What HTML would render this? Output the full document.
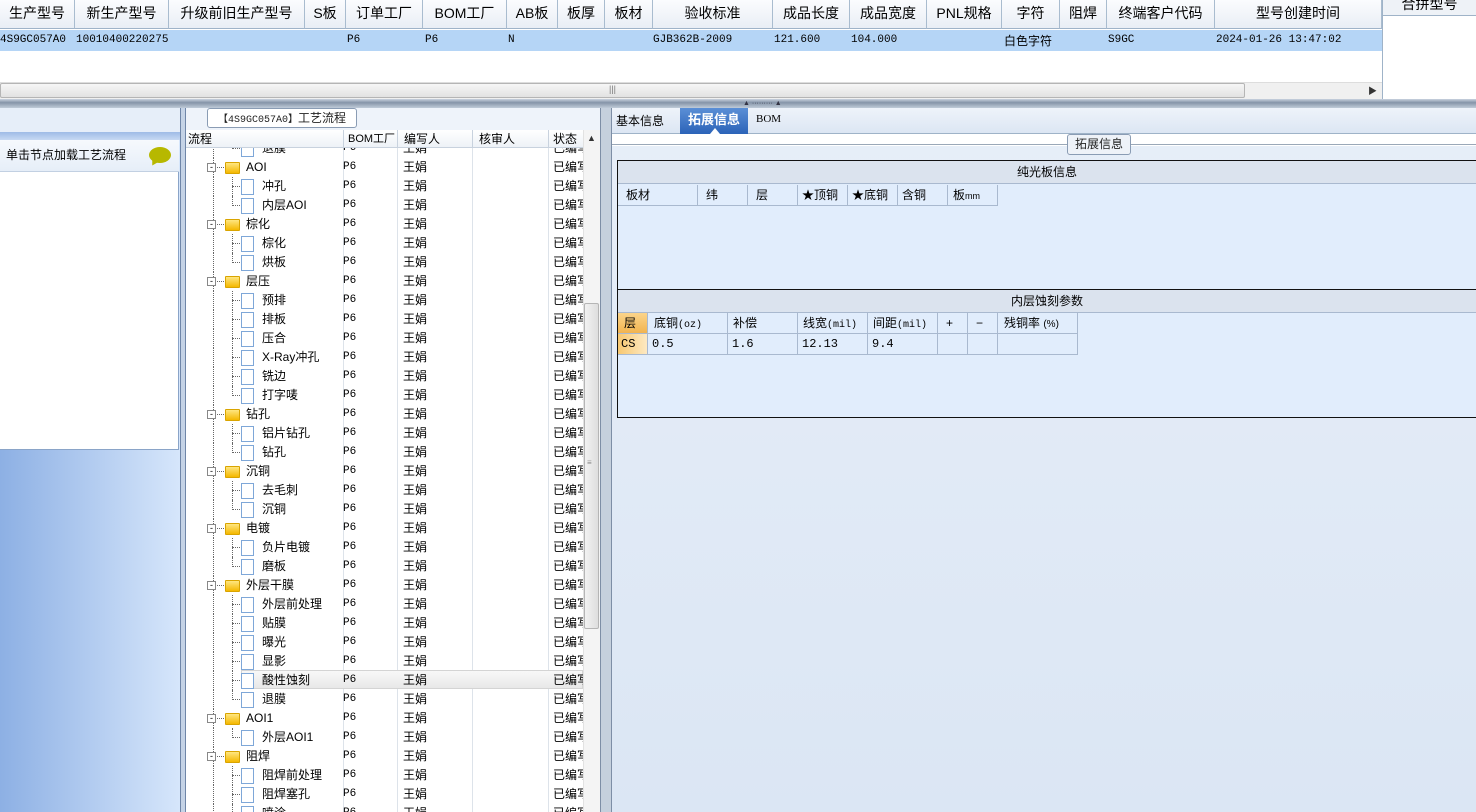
<!DOCTYPE html>
<html><head><meta charset="utf-8"><style>
*{margin:0;padding:0;box-sizing:border-box}
html,body{width:1476px;height:812px;overflow:hidden}
body{position:relative;background:#fff;font-family:"Liberation Sans","Noto Sans CJK SC",sans-serif;font-size:12px;color:#000}
.a{position:absolute}
.hd{position:absolute;top:0;height:29px;line-height:27px;font-size:14px;text-align:center;border-right:1px solid #a9bccf;background:linear-gradient(#fbfcfe,#e9eef5);border-bottom:1px solid #9fb3c8;white-space:nowrap;overflow:hidden}
.cell{position:absolute;top:30px;height:21px;line-height:21px;font-family:"Liberation Mono","Noto Sans CJK SC",monospace;font-size:11px;white-space:nowrap}
.tr{position:absolute;left:186px;width:397px;height:19px;line-height:19px;font-size:12px;white-space:nowrap}
.tr span{position:absolute}
.c1{left:157px;font-family:"Liberation Mono",monospace;font-size:11px}
.c2{left:217px}
.c3{left:367px}
.fold{position:absolute;width:15px;height:12px;top:4px;background:linear-gradient(#ffe680,#f5b800);border:1px solid #d9a400;border-radius:1px}
.doc{position:absolute;width:13px;height:16px;top:2px;background:#fff;border:1px solid #7ea7d8}
.exp{position:absolute;width:9px;height:9px;top:5px;border:1px solid #888;background:#fff;font-size:9px;line-height:6px;text-align:center}
.g{position:absolute;height:21px;line-height:20px;border-right:1px solid #a9b9cf;border-bottom:1px solid #a9b9cf;padding-left:8px;font-size:12px;white-space:nowrap}
</style></head><body>
<div class="hd" style="left:0;width:75px">生产型号</div>
<div class="hd" style="left:75px;width:94px">新生产型号</div>
<div class="hd" style="left:169px;width:136px">升级前旧生产型号</div>
<div class="hd" style="left:305px;width:41px">S板</div>
<div class="hd" style="left:346px;width:77px">订单工厂</div>
<div class="hd" style="left:423px;width:84px">BOM工厂</div>
<div class="hd" style="left:507px;width:51px">AB板</div>
<div class="hd" style="left:558px;width:47px">板厚</div>
<div class="hd" style="left:605px;width:48px">板材</div>
<div class="hd" style="left:653px;width:120px">验收标准</div>
<div class="hd" style="left:773px;width:77px">成品长度</div>
<div class="hd" style="left:850px;width:77px">成品宽度</div>
<div class="hd" style="left:927px;width:75px">PNL规格</div>
<div class="hd" style="left:1002px;width:58px">字符</div>
<div class="hd" style="left:1060px;width:47px">阻焊</div>
<div class="hd" style="left:1107px;width:108px">终端客户代码</div>
<div class="hd" style="left:1215px;width:167px">型号创建时间</div>
<div class="a" style="left:1382px;top:0;width:94px;height:16px;border-left:1px solid #9fb3c8;border-bottom:1px solid #9fb3c8;background:#eef2f7;font-size:14px;text-align:center;line-height:8px;overflow:hidden">合拼型号</div>
<div class="a" style="left:1382px;top:16px;width:1px;height:84px;background:#9fb3c8"></div>
<div class="a" style="left:0;top:30px;width:1382px;height:21px;background:#b5d5f6"></div>
<div class="cell" style="left:0">4S9GC057A0</div>
<div class="cell" style="left:76px">10010400220275</div>
<div class="cell" style="left:347px">P6</div>
<div class="cell" style="left:425px">P6</div>
<div class="cell" style="left:508px">N</div>
<div class="cell" style="left:653px">GJB362B-2009</div>
<div class="cell" style="left:774px">121.600</div>
<div class="cell" style="left:851px">104.000</div>
<div class="cell" style="left:1004px;font-family:'Noto Sans CJK SC',sans-serif;font-size:12px">白色字符</div>
<div class="cell" style="left:1108px">S9GC</div>
<div class="cell" style="left:1216px">2024-01-26 13:47:02</div>
<div class="a" style="left:0;top:82px;width:1382px;height:17px;background:#f0f0f0;border-top:1px solid #ddd"></div>
<div class="a" style="left:0;top:83px;width:1245px;height:15px;background:linear-gradient(#f6f6f6,#e2e2e2);border:1px solid #b5b5b5;border-radius:2px"></div>
<div class="a" style="left:609px;top:84px;font-size:9px;color:#777">|||</div>
<div class="a" style="left:1368px;top:84px;font-size:9px;color:#333">▶</div>
<div class="a" style="left:0;top:99px;width:1476px;height:9px;background:linear-gradient(#c9d3df,#8594a8 40%,#c0cbd8)"></div>
<div class="a" style="left:743px;top:100px;font-size:7px;color:#334">▲ ········· ▲</div>
<div class="a" style="left:0;top:108px;width:180px;height:704px;background:linear-gradient(90deg,#8db0e4,#d6e6fb)"></div>
<div class="a" style="left:0;top:108px;width:180px;height:24px;background:#e6eef9"></div>
<div class="a" style="left:0;top:132px;width:180px;height:8px;background:linear-gradient(#9ebbe6,#c7d9f3)"></div>
<div class="a" style="left:0;top:140px;width:179px;height:310px;background:#fff;border-right:1px solid #8aa4c8;border-bottom:1px solid #8aa4c8"></div>
<div class="a" style="left:0;top:140px;width:179px;height:32px;background:linear-gradient(#f6f9fd,#e6eef8);border-bottom:1px solid #c2d0e2"></div>
<div class="a" style="left:6px;top:146px;font-size:12px">单击节点加载工艺流程</div>
<div class="a" style="left:149px;top:147px;width:22px;height:16px;border-radius:50%;background:#b7b800"></div>
<div class="a" style="left:150px;top:159px;width:0;height:0;border-left:4px solid transparent;border-right:4px solid transparent;border-top:7px solid #b7b800;transform:rotate(30deg)"></div>
<div class="a" style="left:180px;top:108px;width:6px;height:704px;background:#c5d3e6;border-left:1px solid #6f86a8;border-right:1px solid #6f86a8"></div>
<div class="a" style="left:186px;top:108px;width:414px;height:704px;background:#eef3fa"></div>
<div class="a" style="left:186px;top:130px;width:414px;height:682px;background:#fff;border-top:1px solid #9fb3c8"></div>
<div class="a" style="left:207px;top:108px;width:150px;height:20px;background:#fff;border:1px solid #8a9cb4;border-radius:3px;font-size:12px;line-height:18px;text-align:center;color:#222"><span style="font-family:'Liberation Mono',monospace;font-size:10px">【4S9GC057A0】</span>工艺流程</div>
<div class="a" style="left:343px;top:130px;width:1px;height:682px;background:#dde3ea"></div>
<div class="a" style="left:397px;top:130px;width:1px;height:682px;background:#dde3ea"></div>
<div class="a" style="left:472px;top:130px;width:1px;height:682px;background:#dde3ea"></div>
<div class="a" style="left:548px;top:130px;width:1px;height:682px;background:#dde3ea"></div>
<div class="a" style="left:583px;top:130px;width:17px;height:682px;background:#f4f4f4;border-left:1px solid #e2e2e2"></div>
<div class="a" style="left:587px;top:133px;font-size:9px;color:#333">▲</div>
<div class="a" style="left:584px;top:303px;width:15px;height:326px;background:linear-gradient(90deg,#f2f2f2,#dedede);border:1px solid #b5b5b5;border-radius:2px"></div>
<div class="a" style="left:587px;top:461px;font-size:8px;color:#888;line-height:3px">≡</div>
<div class="a" style="left:241px;top:670px;width:342px;height:19px;background:linear-gradient(#f8f8f8,#e8e8e8);border:1px solid #d4d4d4"></div>
<div id="tree"></div>
<div class="a" style="left:186px;top:130px;width:397px;height:18px;background:linear-gradient(#fff,#eef2f7);border-bottom:1px solid #c8d2de;font-size:12px;line-height:18px">
<span class="a" style="left:2px">流程</span><span class="a" style="left:162px;font-size:11px">BOM工厂</span><span class="a" style="left:218px">编写人</span><span class="a" style="left:293px">核审人</span><span class="a" style="left:367px">状态</span>
<div class="a" style="left:157px;top:0;width:1px;height:18px;background:#c8d2de"></div><div class="a" style="left:211px;top:0;width:1px;height:18px;background:#c8d2de"></div><div class="a" style="left:286px;top:0;width:1px;height:18px;background:#c8d2de"></div><div class="a" style="left:362px;top:0;width:1px;height:18px;background:#c8d2de"></div></div>
<div class="a" style="left:600px;top:108px;width:12px;height:704px;background:#c5d0dd;border-left:1px solid #7d8ea6;border-right:1px solid #7d8ea6"></div>
<div class="a" style="left:612px;top:108px;width:864px;height:704px;background:linear-gradient(#e7eef8,#dbe6f4)"></div>
<div class="a" style="left:612px;top:108px;width:864px;height:26px;background:linear-gradient(#eef3fa,#dce6f3);border-bottom:1px solid #9fb3c8"></div>
<div class="a" style="left:616px;top:112px;font-size:12px">基本信息</div>
<div class="a" style="left:680px;top:108px;width:68px;height:26px;background:linear-gradient(#5b8fd6,#2b63b8);color:#fff;font-weight:bold;font-size:13px;text-align:center;line-height:24px">拓展信息</div>
<div class="a" style="left:710px;top:128px;width:0;height:0;border-left:5px solid transparent;border-right:5px solid transparent;border-bottom:6px solid #fff"></div>
<div class="a" style="left:756px;top:113px;font-family:'Liberation Serif',serif;font-size:11px">BOM</div>
<div class="a" style="left:612px;top:134px;width:864px;height:12px;background:#fff"></div>
<div class="a" style="left:612px;top:144px;width:864px;height:1px;background:#9aa8b8"></div>
<div class="a" style="left:1067px;top:134px;width:64px;height:21px;background:#eef2f8;border:1px solid #8a9cb4;border-radius:3px;text-align:center;line-height:18px;font-size:12px;color:#222">拓展信息</div>
<div class="a" style="left:617px;top:160px;width:859px;height:258px;background:#e1edfc;border:1px solid #111;border-right:none"></div>
<div class="a" style="left:618px;top:161px;width:858px;height:23px;background:#dbe3ee;text-align:center;line-height:22px;font-size:12px;border-bottom:1px solid #a9b9cf">纯光板信息</div>
<div class="g" style="left:618px;top:185px;width:80px">板材</div>
<div class="g" style="left:698px;top:185px;width:50px">纬</div>
<div class="g" style="left:748px;top:185px;width:50px">层</div>
<div class="g" style="left:798px;top:185px;width:50px;padding-left:4px">★顶铜</div>
<div class="g" style="left:848px;top:185px;width:50px;padding-left:4px">★底铜</div>
<div class="g" style="left:898px;top:185px;width:50px;padding-left:4px">含铜</div>
<div class="g" style="left:948px;top:185px;width:50px;padding-left:5px">板<span style="font-size:9px">mm</span></div>
<div class="a" style="left:618px;top:289px;width:858px;height:1px;background:#111"></div>
<div class="a" style="left:618px;top:290px;width:858px;height:23px;background:#dbe3ee;text-align:center;line-height:22px;font-size:12px;border-bottom:1px solid #a9b9cf">内层蚀刻参数</div>
<div class="g" style="left:618px;top:313px;width:30px;background:linear-gradient(#fbd48a,#f2b450);padding-left:6px">层</div>
<div class="g" style="left:648px;top:313px;width:80px;padding-left:6px">底铜<span style="font-size:10px;font-family:'Liberation Mono',monospace">(oz)</span></div>
<div class="g" style="left:728px;top:313px;width:70px;padding-left:5px">补偿</div>
<div class="g" style="left:798px;top:313px;width:70px;padding-left:5px">线宽<span style="font-size:10px;font-family:'Liberation Mono',monospace">(mil)</span></div>
<div class="g" style="left:868px;top:313px;width:70px;padding-left:5px">间距<span style="font-size:10px;font-family:'Liberation Mono',monospace">(mil)</span></div>
<div class="g" style="left:938px;top:313px;width:30px">+</div>
<div class="g" style="left:968px;top:313px;width:30px">−</div>
<div class="g" style="left:998px;top:313px;width:80px;padding-left:6px">残铜率 <span style="font-size:10px">(%)</span></div>
<div class="g" style="left:618px;top:334px;width:30px;background:linear-gradient(90deg,#f8c870,#fde9c2);padding-left:3px;font-family:'Liberation Mono',monospace">CS</div>
<div class="g" style="left:648px;top:334px;width:80px;padding-left:4px;font-family:'Liberation Mono',monospace">0.5</div>
<div class="g" style="left:728px;top:334px;width:70px;padding-left:4px;font-family:'Liberation Mono',monospace">1.6</div>
<div class="g" style="left:798px;top:334px;width:70px;padding-left:4px;font-family:'Liberation Mono',monospace">12.13</div>
<div class="g" style="left:868px;top:334px;width:70px;padding-left:4px;font-family:'Liberation Mono',monospace">9.4</div>
<div class="g" style="left:938px;top:334px;width:30px"></div>
<div class="g" style="left:968px;top:334px;width:30px"></div>
<div class="g" style="left:998px;top:334px;width:80px"></div>
<script>
var rows=[[1,"退膜"],[0,"AOI"],[1,"冲孔"],[1,"内层AOI"],[0,"棕化"],[1,"棕化"],[1,"烘板"],[0,"层压"],[1,"预排"],[1,"排板"],[1,"压合"],[1,"X-Ray冲孔"],[1,"铣边"],[1,"打字唛"],[0,"钻孔"],[1,"铝片钻孔"],[1,"钻孔"],[0,"沉铜"],[1,"去毛刺"],[1,"沉铜"],[0,"电镀"],[1,"负片电镀"],[1,"磨板"],[0,"外层干膜"],[1,"外层前处理"],[1,"贴膜"],[1,"曝光"],[1,"显影"],[1,"酸性蚀刻"],[1,"退膜"],[0,"AOI1"],[1,"外层AOI1"],[0,"阻焊"],[1,"阻焊前处理"],[1,"阻焊塞孔"],[1,"喷涂"]];
var h="";
rows.forEach(function(r,i){var y=139+i*19;
h+='<div class="tr" style="top:'+y+'px;">';
h+='<div class="a" style="left:27px;top:0;width:0;height:19px;border-left:1px dotted #666"></div>';
if(r[0]==0){h+='<div class="exp" style="left:21px">-</div><div class="a" style="left:31px;top:9px;width:7px;border-top:1px dotted #666"></div><div class="fold" style="left:39px"></div><span style="left:60px">'+r[1]+'</span>';}
else{h+='<div class="a" style="left:46px;top:0;width:0;height:'+(rows[i+1]&&rows[i+1][0]==1?19:10)+'px;border-left:1px dotted #666"></div><div class="a" style="left:46px;top:9px;width:8px;border-top:1px dotted #666"></div><div class="doc" style="left:55px"></div><span style="left:76px">'+r[1]+'</span>';}
h+='<span class="c1">P6</span><span class="c2">王娟</span><span class="c3" style="width:30px;overflow:hidden">已编写</span></div>';});
document.getElementById("tree").innerHTML=h;
</script>
</body></html>
